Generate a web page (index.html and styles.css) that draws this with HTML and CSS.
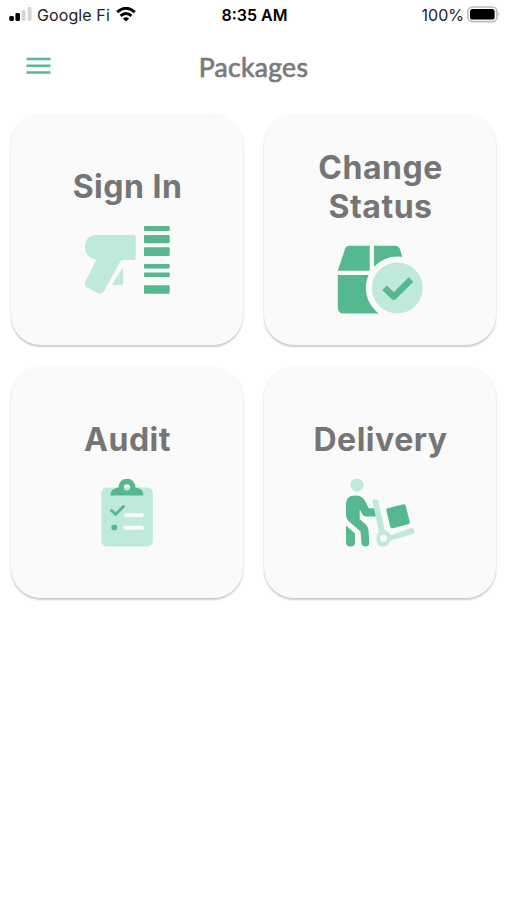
FILE: index.html
```html
<!DOCTYPE html>
<html lang="en">
<head>
<meta charset="utf-8">
<meta name="viewport" content="width=device-width, initial-scale=1">
<title>Packages</title>
<link rel="stylesheet" href="styles.css">
</head>
<body>
<div class="status">
  <div class="status-left">
    <svg class="signal" width="23" height="15" viewBox="0 0 23 15">
      <rect x=".3" y="9" width="4.6" height="5" rx="1.4"/>
      <rect x="6.4" y="6" width="4.6" height="8" rx="1.4"/>
      <rect class="off" x="12.6" y="3" width="4" height="11" rx="1.4"/>
      <rect class="off" x="18.6" y="0" width="4" height="14" rx="1.4"/>
    </svg>
    <span class="carrier">Google Fi</span>
    <svg class="wifi" width="20" height="15" viewBox="0 0 20 15">
      <path class="arc" d="M1.2 5.2Q10 -2.6 18.8 5.2M4.6 8.8Q10 4.1 15.4 8.8"/>
      <path d="M10 14.6L6.9 11.5Q10 9 13.1 11.5Z"/>
    </svg>
  </div>
  <div class="clock">8:35 AM</div>
  <div class="status-right">
    <span class="percent">100%</span>
    <svg class="battery" width="33" height="18" viewBox="0 0 33 18">
      <rect class="shell" x=".9" y="1" width="29" height="14.6" rx="4.6"/>
      <rect x="3" y="3" width="24.6" height="10.6" rx="2.6"/>
      <path class="cap" d="M31.4 6.1Q33.4 8.3 31.4 10.5Z"/>
    </svg>
  </div>
</div>
<header class="bar">
  <button class="menu" aria-label="Menu">
    <svg width="25" height="18" viewBox="0 0 25 18">
      <path d="M.5 2H24.5M.5 8.8H24.5M.5 15.5H24.5"/>
    </svg>
  </button>
  <h1>Packages</h1>
</header>
<main class="grid">
  <a class="card">
    <h2>Sign In</h2>
    <svg class="icon" width="90" height="69" viewBox="0 0 90 69">
      <path class="light" d="M15 10H52Q53.7 10 53.7 11.7V33.3Q53.7 35 52 35H40.500Q39 35 38 37L22 66Q19.5 70.3 15 68L5.5 62.5Q1.5 60 3.5 56L14.5 35Q3 32 3 22.5Q3 10 15 10Z"/>
      <path class="light" d="M41.2 42V58Q41.2 60 39.2 60H31Q30 60 30.500 59Z"/>
      <g class="dark">
        <rect x="62" y="1" width="25.7" height="5" rx="1"/>
        <rect x="62" y="10" width="25.7" height="8.3" rx="1"/>
        <rect x="62" y="22.3" width="25.7" height="8.7" rx="1"/>
        <rect x="62" y="39" width="25.7" height="4.5" rx="1"/>
        <rect x="62" y="47.5" width="25.7" height="4.5" rx="1"/>
        <rect x="62" y="60.3" width="25.7" height="8.5" rx="1"/>
      </g>
    </svg>
  </a>
  <a class="card card-tall">
    <h2>Change<br>Status</h2>
    <svg class="icon" width="90" height="69" viewBox="0 0 90 69">
      <path class="dark" d="M14.5 .7H34.7V25.7H2.8L10 4Q11.3 .7 14.5 .7ZM39 .7H60.5Q63.5 .7 64.7 3.5L71.5 25.7H39ZM2.8 30H71V68.5H9Q2.8 68.5 2.8 62.5Z"/>
      <circle class="paper" cx="62.3" cy="43" r="31.5"/>
      <circle class="light" cx="62.3" cy="43" r="25.4"/>
      <path class="check" d="M49.5 42.8L58.8 51.7L76 34.5"/>
    </svg>
  </a>
  <a class="card">
    <h2>Audit</h2>
    <svg class="icon" width="90" height="69" viewBox="0 0 90 69">
      <rect class="light" x="19.3" y="9.5" width="51.5" height="59" rx="5.5"/>
      <path class="dark" fill-rule="evenodd" d="M28.5 17.6V15.5Q29.5 10.5 36.5 9.5Q37.5 .8 45 .8Q52.5 .8 53.5 9.5Q60.5 10.5 61.3 15.5V17.6ZM45 6.3A3.1 3.1 0 1 0 45 12.5A3.1 3.1 0 1 0 45 6.3Z"/>
      <path class="tick" d="M29.5 32.5L33.7 36.3L41.5 28.5"/>
      <circle class="dark" cx="32.3" cy="49.5" r="3"/>
      <path class="rules" d="M42.5 37.3H61.5M41.5 49.8H61.5"/>
    </svg>
  </a>
  <a class="card">
    <h2>Delivery</h2>
    <svg class="icon" width="90" height="69" viewBox="0 0 90 69">
      <circle class="light" cx="22" cy="7.2" r="6.6"/>
      <path class="dark" d="M11 26Q11 17.5 20 17.5Q27 17.5 29.5 22L33.7 30.3H40.2L42.4 38.5H31Q28.3 38.5 27.2 36L24.7 31.5V41L31.2 47Q33.3 49 33.5 52L34.3 64.5Q34.3 68.5 30.3 68.5Q27 68.5 26.5 65L25.5 53.5L13.5 43Q11 40.7 11 37Z"/>
      <path class="dark" d="M11 47.5L20 55.5V64.5Q20 68.5 15.5 68.5Q11 68.5 11 64.5Z"/>
      <path class="light" fill-rule="evenodd" d="M37.5 23.5Q37 21.5 39 21.5L43 21.7L49.7 52Q54.7 53.5 55.5 57.3L76.5 50Q78.5 49.5 79 51.5L79.3 54Q79.3 55.5 77.5 56L55.5 62.5Q53.5 68.5 48.5 68.5Q41.3 68.5 41.3 60.5Q41.3 56.5 44 54ZM48.5 56.8A3.5 3.5 0 1 0 48.5 63.8A3.5 3.5 0 1 0 48.5 56.8Z"/>
      <rect class="dark" x="53" y="28" width="20" height="20.6" rx="2" transform="rotate(-14 62.8 38)"/>
    </svg>
  </a>
</main>
</body>
</html>
```
FILE: styles.css
```css
* {
  box-sizing: border-box;
}

body {
  margin: 0;
  min-height: 100vh;
  background: #fff;
  color: #000;
  font-family: Inter, "Liberation Sans", sans-serif;
}

.status {
  display: grid;
  grid-template-columns: 1fr auto 1fr;
  align-items: center;
  height: 29px;
  padding: 0 7px 0 9px;
  font-size: 16px;
}

.status-left,
.status-right {
  display: flex;
  align-items: center;
}

.status-right {
  justify-content: flex-end;
  gap: 3px;
}

.signal .off {
  fill: #d6d6d6;
}

.carrier {
  margin: 0 6px 0 5px;
  color: #222;
  letter-spacing: 0.1px;
}

.wifi .arc {
  fill: none;
  stroke: #000;
  stroke-width: 3;
}

.clock {
  font-weight: 600;
}

.percent {
  color: #222;
}

.battery .shell {
  fill: #fff;
  stroke: #bcbcbc;
  stroke-width: 1.6;
}

.battery .cap {
  fill: #bcbcbc;
}

.bar {
  display: grid;
  grid-template-columns: 80px 1fr 80px;
  align-items: center;
  height: 85px;
  padding-bottom: 12px;
}

.menu {
  display: flex;
  padding: 0 0 0 26px;
  border: 0;
  background: none;
}

.menu path {
  stroke: #56b894;
  stroke-width: 2.5;
}

h1 {
  margin: 2px 0 0;
  text-align: center;
  color: #7a7a7a;
  font: 400 26.5px/32px Lato, sans-serif;
  letter-spacing: 0.3px;
  -webkit-text-stroke: 0.7px #7a7a7a;
}

.grid {
  display: grid;
  grid-template-columns: 232px 232px;
  grid-auto-rows: 231px;
  gap: 22px 21px;
  padding-left: 11px;
}

.card {
  display: flex;
  flex-direction: column;
  align-items: center;
  justify-content: center;
  gap: 19px;
  padding-top: 1px;
  border-radius: 30px;
  background: #fafafa;
  box-shadow: 0 2px 2px rgba(0, 0, 0, 0.2), 0 0 2px rgba(0, 0, 0, 0.04);
}

.card-tall {
  padding-top: 3px;
}

h2 {
  margin: 0;
  padding-left: 1px;
  text-align: center;
  color: #757575;
  font-size: 32px;
  font-weight: 700;
  line-height: 39px;
  letter-spacing: 0.5px;
}

.icon {
  display: block;
}

.light {
  fill: #bfeadb;
}

.dark {
  fill: #56b891;
}

.paper {
  fill: #fafafa;
}

.check,
.tick,
.rules {
  fill: none;
  stroke: #56b891;
  stroke-width: 6.5;
  stroke-linejoin: round;
}

.tick {
  stroke-width: 3;
  stroke-linecap: round;
}

.rules {
  stroke: #fafafa;
  stroke-width: 4;
}
```
